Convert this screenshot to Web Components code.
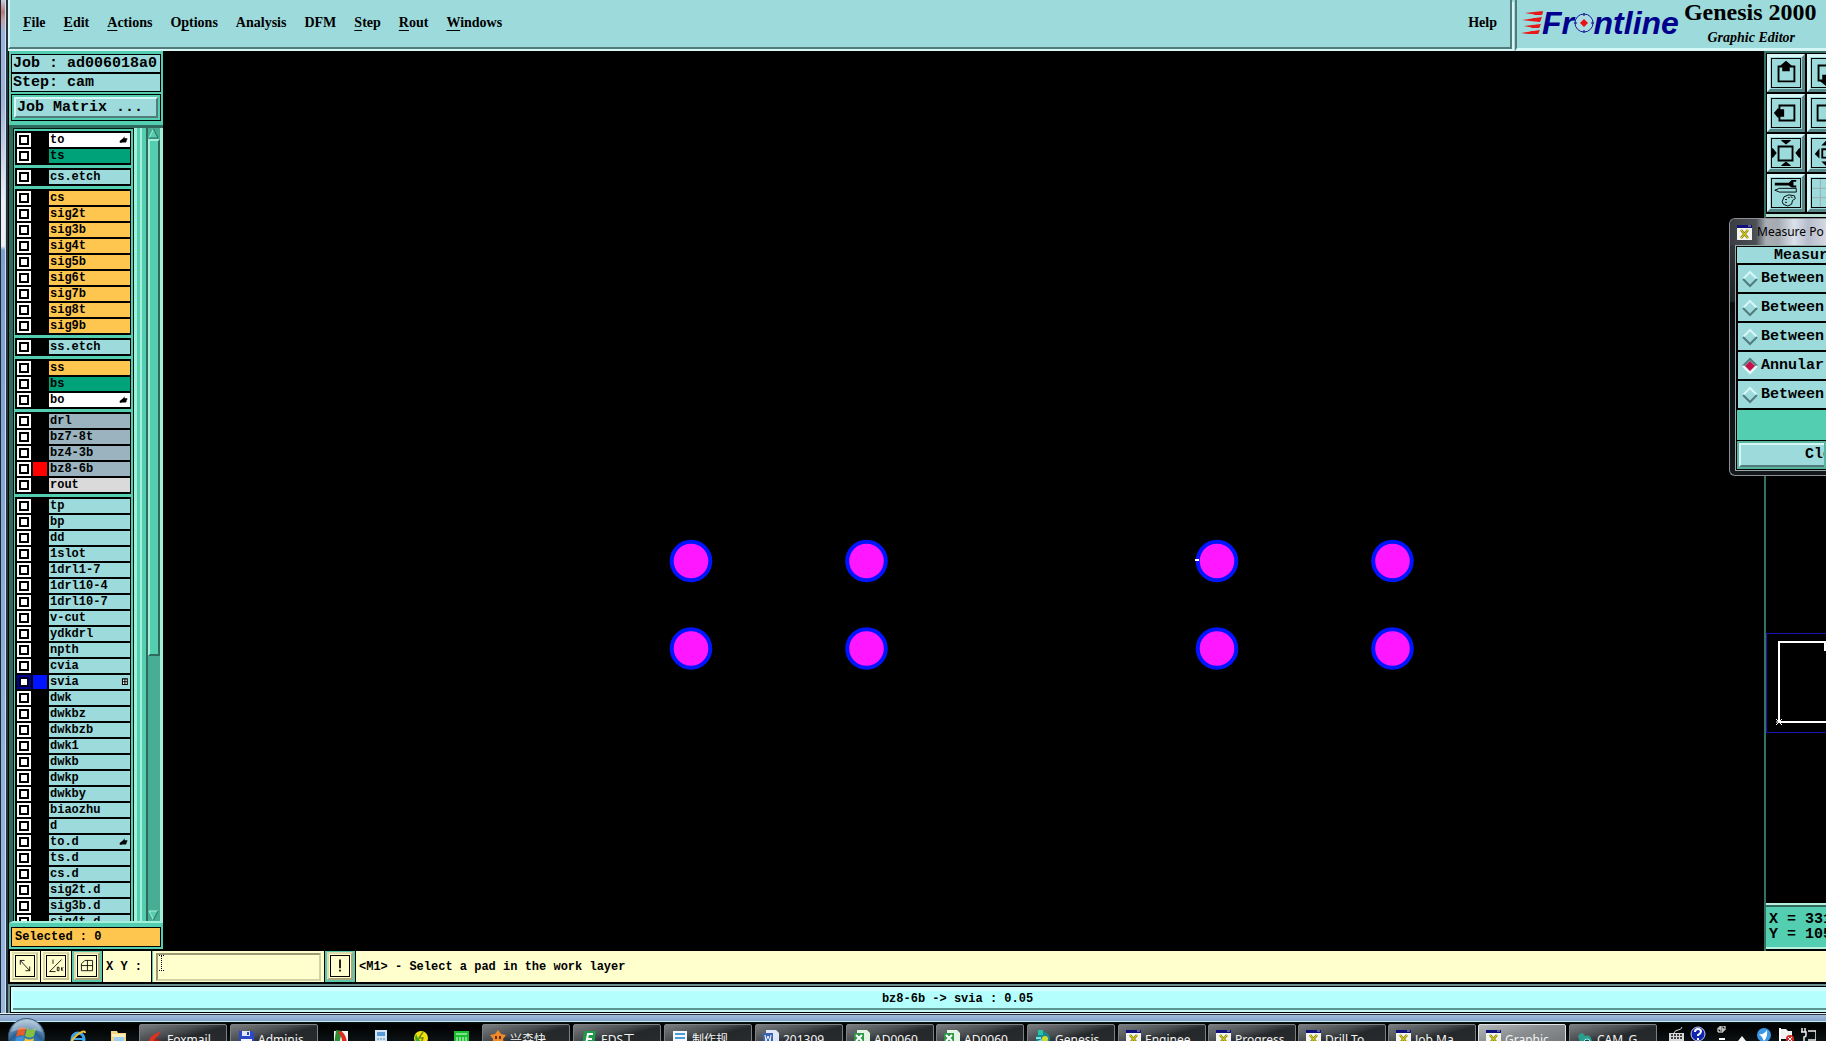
<!DOCTYPE html>
<html lang="en">
  <head>
    <meta charset="utf-8">
    <title>Genesis 2000 - Graphic Editor</title>
    <style>
      html, body {
        margin: 0;
        height: 100%;
        overflow: hidden;
        background: #000;
      }
      body {
        --teal: #9cdadb;
        --teal-hi: #d6f7f6;
        --teal-lo: #527c7c;
        --green: #54ceb0;
        --green-hi: #a4efda;
        --green-lo: #2f6a5c;
        --cream: #ffffce;
        --mono: "Liberation Mono", "Courier New", monospace;
        --serif: "Liberation Serif", "Times New Roman", serif;
        --ui: "Noto Sans", "Noto Sans CJK SC", sans-serif;
      }
    </style>
  </head>
  <body>
    <gx-desktop></gx-desktop>

<script>
function define(name, html, setup) {
  const tmpl = document.createElement('template');
  tmpl.innerHTML = '<style>*{box-sizing:border-box}:host{box-sizing:border-box}</style>' + html;
  customElements.define(name, class extends HTMLElement {
    connectedCallback() {
      if (this.shadowRoot) return;
      this.attachShadow({mode: 'open'});
      this.shadowRoot.append(tmpl.content.cloneNode(true));
      if (setup) setup(this, this.shadowRoot);
    }
  });
}

/* ---------- menu bar ---------- */
define('gx-menu', `
  <style>
    :host { display: block; }
    button {
      display: block; margin: 0; padding: 0; border: 0; background: none;
      font: bold 14px/18px var(--serif); color: #000;
    }
    u { text-underline-offset: 3px; text-decoration-thickness: 1px; }
  </style>
  <button type="button"></button>
`, (el, root) => {
  const t = el.getAttribute('label');
  const k = el.getAttribute('key');
  const i = k ? t.indexOf(k) : -1;
  root.querySelector('button').innerHTML = i < 0 ? t : t.slice(0, i) + '<u>' + k + '</u>' + t.slice(i + 1);
});

define('gx-logo', `
  <style>
    :host { display: flex; align-items: center; height: 30px; }
    .streaks { display: block; width: 24px; height: 24px; margin-right: -3px; }
    .word { font: italic bold 32px/30px "Liberation Sans", Arial, sans-serif; color: #00008c; }
    .o { position: relative; color: transparent; }
    .o svg { position: absolute; left: 0; top: 8px; width: 20px; height: 20px; }
  </style>
  <svg class="streaks" viewBox="0 0 24 24" fill="#e81818">
    <path d="M4 2L22 0L20 4L10 3Z"/><path d="M1 9L21 6L19 11L9 10Z"/>
    <path d="M3 15L20 13L18 17L8 16Z"/><path d="M0 22L19 19L17 23L8 23Z"/>
    <path d="M14 1h8l-1 3h-8zM12 7h8l-1 3h-7zM11 14h8l-1 3h-8zM10 20h8l-1 3h-9z"/>
  </svg>
  <span class="word">Fr<span class="o">o<svg viewBox="0 0 20 20">
    <circle cx="10" cy="10" r="9" fill="#aadde2" stroke="#1c1c9a"/>
    <path d="M10 0v3M10 17v3M0 10h3M17 10h3" stroke="#00008c"/>
    <path d="M10 6L14 10L10 14L6 10Z" fill="#e81010"/>
  </svg></span>ntline</span>
`);

define('gx-menubar', `
  <style>
    :host { display: flex; height: 51px; background: var(--teal); }
    nav {
      flex: 1; display: flex; gap: 18px; padding: 14px 13px 0 13px;
      border: solid; border-width: 0 2px 2px 2px;
      border-color: var(--teal-lo) var(--teal-lo) var(--teal-lo) var(--teal-hi);
    }
    .left { flex: 1; display: flex; box-shadow: 0 2px var(--teal-hi), 2px 2px var(--teal-hi); margin-bottom: 2px; margin-right: 3px; }
    gx-menu:last-child { margin-left: auto; }
    .brand {
      width: 311px; flex: none; display: flex; gap: 5px; align-items: flex-start; padding-left: 4px; overflow: hidden;
      border-left: 2px solid var(--teal-lo); border-bottom: 3px solid var(--teal-hi);
    }
    gx-logo { margin-top: 8px; }
    .name { display: flex; flex-direction: column; align-items: center; white-space: nowrap; }
    h1 { margin: 0; font: bold 24px/24px var(--serif); }
    h2 { margin: 0; padding-left: 2px; font: italic bold 14px/27px var(--serif); }
  </style>
  <div class="left">
    <nav>
      <gx-menu label="File" key="F"></gx-menu>
      <gx-menu label="Edit" key="E"></gx-menu>
      <gx-menu label="Actions" key="A"></gx-menu>
      <gx-menu label="Options" key="p"></gx-menu>
      <gx-menu label="Analysis"></gx-menu>
      <gx-menu label="DFM"></gx-menu>
      <gx-menu label="Step" key="S"></gx-menu>
      <gx-menu label="Rout" key="R"></gx-menu>
      <gx-menu label="Windows" key="W"></gx-menu>
      <gx-menu label="Help"></gx-menu>
    </nav>
  </div>
  <div class="brand">
    <gx-logo></gx-logo>
    <div class="name"><h1>Genesis 2000</h1><h2>Graphic Editor</h2></div>
  </div>
`);

/* ---------- layer list ---------- */
const marks = {
  hand: '<path d="M1 7L6 3L8 0V3H12V5H11V8H10V9H4L3 10L1 9Z"/>',
  grid: '<path d="M5 1h7v8h-7zM8.500 1v8M5 5h7" fill="#fff" stroke="#000" stroke-width="1.500"/>'
};

define('gx-layer', `
  <style>
    :host { display: block; height: 16px; padding: 1px 0; }
    label { display: grid; grid-template-columns: 14px 14px 1fr; gap: 2px; height: 14px; }
    input {
      appearance: none; margin: 0; width: 14px; height: 14px;
      background: #fff; border: 2px solid #fff; box-shadow: inset 0 0 0 2px #000;
    }
    :host([active]) input { border-color: #000096; box-shadow: inset 0 0 0 2px #00001c; }
    .swatch { background: var(--swatch, #000); }
    .name {
      display: flex; justify-content: space-between; align-items: center;
      padding: 0 2px 0 1px; overflow: hidden; background: var(--fill, var(--teal));
      font: bold 12px/15px var(--mono); color: #000;
    }
    svg { width: 9px; height: 8px; }
  </style>
  <label><input type="checkbox"><span class="swatch"></span><span class="name"><slot></slot></span></label>
`, (el, root) => {
  const fills = {paste: '#fff', mask: '#00a27a', signal: '#fec64e', drill: '#9ab3be', rout: '#dadada'};
  const fill = fills[el.getAttribute('kind')];
  if (fill) el.style.setProperty('--fill', fill);
  if (el.hasAttribute('swatch')) el.style.setProperty('--swatch', el.getAttribute('swatch'));
  if (el.hasAttribute('mark')) {
    root.querySelector('.name').insertAdjacentHTML('beforeend',
      '<svg viewBox="0 0 13 11">' + marks[el.getAttribute('mark')] + '</svg>');
  }
});

// name | kind | mark | swatch, one array per framed group
const groups = [
  ['to|paste|hand', 'ts|mask'],
  ['cs.etch'],
  ['cs|signal', 'sig2t|signal', 'sig3b|signal', 'sig4t|signal', 'sig5b|signal', 'sig6t|signal', 'sig7b|signal', 'sig8t|signal', 'sig9b|signal'],
  ['ss.etch'],
  ['ss|signal', 'bs|mask', 'bo|paste|hand'],
  ['drl|drill', 'bz7-8t|drill', 'bz4-3b|drill', 'bz8-6b|drill||#f00', 'rout|rout'],
  ['tp', 'bp', 'dd', '1slot', '1drl1-7', '1drl10-4', '1drl10-7', 'v-cut', 'ydkdrl', 'npth', 'cvia', 'svia||grid|#0014ff',
   'dwk', 'dwkbz', 'dwkbzb', 'dwk1', 'dwkb', 'dwkp', 'dwkby', 'biaozhu', 'd', 'to.d||hand', 'ts.d', 'cs.d', 'sig2t.d', 'sig3b.d', 'sig4t.d']
];

define('gx-layer-list', `
  <style>
    :host {
      display: flex; min-height: 0; overflow: hidden; background: var(--green);
      border-left: 4px solid var(--green-lo); border-top: 3px solid var(--green-lo); border-bottom: 2px solid var(--green-hi);
    }
    .list {
      flex: 1; min-width: 0; overflow: hidden; display: flex; flex-direction: column; gap: 3px;
      padding: 2px 2px 0 1px; border: solid #001a12; border-width: 1px 1px 0 1px;
    }
    .group { flex: none; background: #000; padding: 1px 1px 1px 2px; }
    .rail { width: 12px; border: solid var(--green-hi); border-width: 0 0 0 3px; }
    .rail i { display: block; height: 100%; width: 5px; border-right: 2px solid var(--green-hi); }
    .bar {
      width: 17px; display: flex; flex-direction: column; background: #48ad95;
      border-left: 2px solid var(--green-lo); border-right: 3px solid var(--green-hi);
    }
    .bar svg { display: block; width: 11px; height: 11px; flex: none; }
    .thumb {
      flex: 516; background: var(--green); border: 2px solid;
      border-color: var(--green-hi) var(--green-lo) var(--green-lo) var(--green-hi);
    }
    .trough { flex: 256; }
  </style>
  <div class="list"></div>
  <div class="rail"><i></i></div>
  <div class="bar">
    <svg viewBox="0 0 11 11"><path d="M5.5 1L10 10H1Z" fill="#54ceb0"/><path d="M5.5 1L1 10" stroke="#a4efda" fill="none"/><path d="M5.5 1L10 10H1" stroke="#2f6a5c" fill="none"/></svg>
    <div class="thumb"></div>
    <div class="trough"></div>
    <svg viewBox="0 0 11 11"><path d="M1 1H10L5.5 10Z" fill="#54ceb0"/><path d="M10 1H1L5.5 10" stroke="#a4efda" fill="none"/><path d="M10 1L5.5 10" stroke="#2f6a5c" fill="none"/></svg>
  </div>
`, (el, root) => {
  root.querySelector('.list').innerHTML = groups.map(g => '<div class="group">' + g.map(row => {
    const [name, kind, mark, swatch] = row.split('|');
    return '<gx-layer' + (kind ? ' kind="' + kind + '"' : '') + (mark ? ' mark="' + mark + '"' : '') +
      (swatch ? ' swatch="' + swatch + '"' : '') + (name == 'svia' ? ' active' : '') + '>' + name + '</gx-layer>';
  }).join('') + '</div>').join('');
});

define('gx-sidebar', `
  <style>
    :host {
      display: flex; flex-direction: column; min-height: 0; color: #000;
      border-left: 1px solid #000; border-bottom: 2px solid #000; background: var(--green);
    }
    .info { margin: 3px 2px 0; }
    .info div {
      height: 19px; padding-left: 1px; border: 1px solid #000; background: var(--teal);
      font: bold 15px/18px var(--mono); white-space: pre;
    }
    .matrix { margin: 2px 2px 4px; padding: 2px; height: 27px; border: 1px solid #000; }
    button {
      display: block; width: 100%; height: 21px; padding: 0 0 0 1px; text-align: left;
      border: 2px solid; border-color: var(--teal-hi) var(--teal-lo) var(--teal-lo) var(--teal-hi);
      background: var(--teal); font: bold 15px/18px var(--mono); color: #000;
    }
    gx-layer-list { flex: 1; }
    .selected {
      margin: 4px 2px 2px; height: 20px; padding-left: 3px; border: 1px solid #000;
      background: #fec64e; font: bold 12px/18px var(--mono);
    }
  </style>
  <div class="info"><div>Job : ad006018a0</div><div>Step: cam</div></div>
  <div class="matrix"><button type="button">Job Matrix ...</button></div>
  <gx-layer-list></gx-layer-list>
  <div class="selected">Selected : 0</div>
`);

/* ---------- drawing area ---------- */
define('gx-canvas', `
  <style>
    :host { display: block; min-width: 0; background: #000; overflow: hidden; }
    svg { display: block; width: 100%; height: 100%; }
    circle { fill: #ff18ff; stroke: #0014ff; stroke-width: 4px; }
  </style>
  <svg></svg>
`, (el, root) => {
  let s = '';
  for (const y of [510, 597.5]) {
    for (const x of [528, 703.5, 1054, 1229.5]) s += '<circle cx="' + x + '" cy="' + y + '" r="19.3"/>';
  }
  // measuring cursor
  root.querySelector('svg').innerHTML = s + '<path d="M1032 509h4" stroke="#fff" stroke-width="2"/>';
});

/* ---------- right hand tools ---------- */
const tools = {
  up: '<path d="M7 8h17v16H7z" class="b"/><path d="M15 2l6 5v1h-2v5h-8V8H9V7z"/>',
  down: '<path d="M7 7h17v16H7z" class="b"/><path d="M15 29l6-5v-1h-2v-6h-8v6H9v1z"/>',
  left: '<path d="M8 7h16v16H8z" class="b"/><path d="M2 15l5-6v2h6v8H7v2z"/>',
  right: '<path d="M6 7h16v16H6z" class="b"/><path d="M28 15l-5-6v2h-6v8h6v2z"/>',
  in: '<path d="M7 8h15v15H7z" class="b"/><path d="M10 1h10v1l-5 4l-5-4zM10 29h10v-1l-5-4l-5 4zM0 10h1l4 5l-4 5H0zM30 10h-1l-4 5l4 5h1z"/>',
  out: '<path d="M11 11h8v9h-8z" class="b"/><path d="M10 7h10l-5-5zM10 24h10l-5 5zM8 10v11l-5-5zM23 10v11l5-5z"/>',
  setup: '<path d="M3 4h15l3-3h5v2h-3v4h3v2h-5l-3-2H3z"/><path d="M3 12l5-2h18v4H8z" fill="none" stroke="#000"/><path d="M11 24l2-5 5-2 6 1 1 3-3 2-1 4-4 2-5-2zM14 22h2M17 20h2M14 25h2M20 19l2 1" fill="none" stroke="#000"/>',
  grid: '<path d="M9 0v30M19 0v30M0 10h30M0 20h30" fill="none" stroke="#a0a9ad"/>'
};

define('gx-tool', `
  <style>
    :host { display: block; width: 38px; height: 38px; }
    button {
      display: block; width: 38px; height: 38px; padding: 1px; background: var(--teal);
      border: 3px solid; border-color: var(--teal-hi) #568786 #568786 var(--teal-hi);
    }
    svg { display: block; width: 30px; height: 30px; border: 1px solid #000; }
    .b { fill: none; stroke: #000; stroke-width: 2px; }
  </style>
  <button type="button"><svg viewBox="0 0 30 30"></svg></button>
`, (el, root) => {
  const icon = el.getAttribute('icon');
  root.querySelector('button').setAttribute('aria-label', icon);
  root.querySelector('svg').innerHTML = tools[icon];
});

define('gx-right-panel', `
  <style>
    :host {
      display: flex; flex-direction: column; min-height: 0; overflow: hidden;
      border-left: 2px solid #356f63; background: #000; color: #000;
    }
    .tools {
      flex: none; height: 166px; display: grid; grid-template-columns: 38px 38px; grid-auto-rows: 38px; gap: 2px;
      padding: 1px; border: solid; border-width: 2px 0 3px 0; border-color: #356f63 transparent #b8e4d8;
    }
    .overview { flex: 1; min-height: 0; }
    .overview svg { display: block; width: 100%; height: 100%; }
    .coords {
      flex: none; height: 46px; margin-bottom: 2px; padding: 7px 0 0 3px; background: var(--green);
      border: solid; border-width: 2px 0; border-color: #b8f0de;
      box-shadow: inset 0 2px var(--green-lo);
      font: bold 15px/15px var(--mono); white-space: pre;
    }
  </style>
  <div class="tools">
    <gx-tool icon="up"></gx-tool><gx-tool icon="down"></gx-tool>
    <gx-tool icon="left"></gx-tool><gx-tool icon="right"></gx-tool>
    <gx-tool icon="in"></gx-tool><gx-tool icon="out"></gx-tool>
    <gx-tool icon="setup"></gx-tool><gx-tool icon="grid"></gx-tool>
  </div>
  <div class="overview">
    <svg fill="none">
      <rect x="0.5" y="416.5" width="160" height="99" stroke="#1616b0"/>
      <path d="M160 425H13V505H160M59 425v9" stroke="#fff" stroke-width="2"/>
      <path d="M10 502l6 6M16 502l-6 6M10 505h6" stroke="#fff"/>
    </svg>
  </div>
  <div class="coords"><div>X = 331</div><div>Y = 105</div></div>
`);

/* ---------- command line and status ---------- */
const cmds = {
  snap: '<path d="M5 5L16 17M5 10V5H10M16 12V17H11"/>',
  angle: '<path d="M3 18L17 4M3 18H10M7 4V9M12 13h2v4h-2zM17 13v4M19 13l-2 2l2 2"/>',
  cell: '<path d="M8 5H17V17H4V9ZM11 5V17M4 11H17"/>',
  alert: '<path d="M10.5 4V14M10.5 16V18" stroke-width="2"/>'
};

define('gx-cmd', `
  <style>
    :host { display: block; padding: 1px 2px; background: var(--cream); }
    :host([pressed]) { background: #58c9ab; }
    button {
      display: block; height: 28px; width: 26px; padding: 1px; background: var(--cream);
      border: 2px solid; border-color: #dcdcae #c4c196 #c4c196 #dcdcae;
    }
    :host([pressed]) button { border-color: #dcdcae #aaa67c #aaa67c #dcdcae; }
    svg { display: block; width: 20px; height: 22px; border: 1px solid #000; fill: none; stroke: #000; }
  </style>
  <button type="button"><svg viewBox="0 0 21 23"></svg></button>
`, (el, root) => {
  root.querySelector('button').setAttribute('aria-label', el.getAttribute('icon'));
  root.querySelector('svg').innerHTML = cmds[el.getAttribute('icon')];
});

define('gx-command-line', `
  <style>
    :host {
      display: flex; gap: 1px; height: 31px; background: #000; color: #000;
      font: bold 12px/32px var(--mono); padding-left: 2px;
    }
    label { width: 48px; padding-left: 3px; background: var(--cream); white-space: pre; }
    .field { position: relative; width: 172px; padding: 2px 3px 1px; background: var(--cream); border-left: 1px solid #58c9ab; }
    input {
      display: block; width: 100%; height: 28px; padding: 0 4px; background: var(--cream); outline: 0;
      border: 2px solid; border-color: #9c9a74 #d2d2a6 #d2d2a6 #9c9a74; font: inherit;
    }
    .caret { position: absolute; left: 6px; top: 4px; width: 5px; height: 16px; }
    .message { flex: 1; padding-left: 3px; background: var(--cream); white-space: nowrap; overflow: hidden; }
  </style>
  <gx-cmd icon="snap"></gx-cmd>
  <gx-cmd icon="angle"></gx-cmd>
  <gx-cmd icon="cell" pressed></gx-cmd>
  <label for="xy">X Y :</label>
  <div class="field">
    <input id="xy" type="text">
    <svg class="caret" viewBox="0 0 5 16" stroke="#000" fill="none"><path d="M0 .5h5M0 15.5h5M2.5 1v14" stroke-dasharray="1 1"/></svg>
  </div>
  <gx-cmd icon="alert" pressed></gx-cmd>
  <div class="message">&lt;M1&gt; - Select a pad in the work layer</div>
`);

define('gx-status', `
  <style>
    :host { display: block; padding-left: 2px; background: #6a8f90; border-top: 2px solid #000; }
    div {
      margin-top: 2px; height: 27px; padding-left: 78px; text-align: center; background: #b4fffe; color: #000;
      border: 1px solid #000; border-right: 0;
      box-shadow: inset 2px 4px #d2ffff, inset 0 -2px #c8f8f8, inset 0 -4px #5c9490;
      font: bold 12px/25px var(--mono);
    }
  </style>
  <div><slot></slot></div>
`);

/* ---------- measure popup ---------- */
define('gx-x-icon', `
  <style>
    :host { display: block; flex: none; width: 15px; height: 15px; }
    svg { display: block; width: 15px; height: 15px; }
  </style>
  <svg viewBox="0 0 15 15"><path d="M0 0h15v15H0z" fill="#f4f4ee"/><path d="M0 0h15v3H0z" fill="#10107c"/><path d="M11 1h3" stroke="#aab"/><path d="M4 5L11 13M11 5L4 13" stroke="#8a8410" stroke-width="2.500"/><path d="M4 5L11 13M11 5L4 13" stroke="#e6de22" stroke-width="1"/></svg>
`);

define('gx-radio', `
  <style>
    :host { display: block; height: 29px; padding-bottom: 2px; background: #000; }
    label {
      display: flex; align-items: center; gap: 4px; height: 27px; padding-left: 5px; background: var(--teal);
      font: bold 15px/27px var(--mono); white-space: nowrap;
    }
    input { position: absolute; opacity: 0; margin: 0; width: 14px; height: 14px; }
    svg { flex: none; width: 14px; height: 14px; fill: none; stroke-width: 2px; overflow: visible; }
    .top { stroke: var(--teal-hi); }
    .bottom { stroke: var(--teal-lo); }
    input:checked + svg .top { stroke: var(--teal-lo); }
    input:checked + svg .bottom { stroke: #eefafa; }
    input:checked + svg { fill: #c8104c; }
  </style>
  <label><input type="radio" name="mode"><svg viewBox="0 0 14 14"><path d="M7 2L12 7L7 12L2 7Z" stroke="none"/><path class="top" d="M0 7L7 0L14 7" fill="none"/><path class="bottom" d="M0 7L7 14L14 7" fill="none"/></svg><slot></slot></label>
`, (el, root) => { root.querySelector('input').checked = el.hasAttribute('checked'); });

define('gx-measure', `
  <style>
    :host {
      display: block; width: 97px; height: 258px; overflow: hidden; color: #000;
      border: 1px solid #8c9096; border-right: 0; border-radius: 6px 0 0 6px;
      background: linear-gradient(#3a3e44, #202428 82px, #0a0c0e 84px, #14181c);
      padding: 0 0 0 5px;
    }
    header {
      display: flex; align-items: center; gap: 5px; height: 26px; margin-left: -5px; padding-left: 7px;
      background: linear-gradient(90deg, #3a3d42, #4c4f54 26px, #a8aeb4 36px, #a4aab0 48px, #dce2ec 64px, #b6bccc 78px, #d4d8e0);
      font: 12px/26px var(--ui); white-space: nowrap;
    }
    .body { height: 226px; border: 1px solid #9aa; border-right: 0; background: #000; padding: 1px 0 1px 1px; }
    .title { height: 16px; padding-left: 37px; background: var(--teal); font: bold 15px/17px var(--mono); margin-bottom: 2px; white-space: nowrap; overflow: hidden; }
    .modes { padding-left: 1px; }
    .gap { height: 30px; background: var(--green); margin-bottom: 1px; }
    .close { padding: 2px; height: 28px; background: #58b69e; }
    button {
      display: block; width: 100%; height: 24px; padding: 0 0 0 64px; text-align: left; overflow: hidden; background: var(--teal);
      border: 2px solid; border-right: 0; border-color: var(--teal-hi) var(--teal-hi) var(--teal-lo);
      font: bold 15px/20px var(--mono); color: #000;
    }
  </style>
  <header><gx-x-icon></gx-x-icon><span>Measure Po</span></header>
  <div class="body">
    <div class="title">Measur</div>
    <div class="modes">
      <gx-radio>Between</gx-radio>
      <gx-radio>Between</gx-radio>
      <gx-radio>Between</gx-radio>
      <gx-radio checked>Annular</gx-radio>
      <gx-radio>Between</gx-radio>
    </div>
    <div class="gap"></div>
    <div class="close"><button type="button">Clo</button></div>
  </div>
`);

/* ---------- Windows taskbar ---------- */
const appIcons = {
  fox: '<path d="M2 16Q0 8 8 4L14 1L11 6Q6 8 7 16Z" fill="#e03020"/><circle cx="10" cy="12" r="3" fill="#b01810"/>',
  disk: '<path d="M1 1h13l2 2v13H1z" fill="#2a48c8"/><path d="M4 1h8v5H4z" fill="#dfe6f4"/><path d="M9 2h2v3H9z" fill="#2a48c8"/><path d="M3 9h11v7H3z" fill="#f4f4f4"/>',
  flower: '<path d="M8 0l3 4 5 1-3 4 1 6-6-2-6 2 1-6-3-4 5-1z" fill="#f08a28"/><path d="M5 6h2v3H5zM9 6h2v3H9z" fill="#6a2a08"/>',
  eds: '<path d="M3 1h12l-2 15H1z" fill="#1f9a48"/><path d="M12 4H7L5 14M6 9h5" stroke="#fff" stroke-width="2" fill="none"/>',
  note: '<path d="M1 1h14v15H1z" fill="#f4f8fc"/><path d="M3 4h10M3 8h10M3 12h10" stroke="#4c9cd8" stroke-width="2"/>',
  word: '<path d="M3 0h10l3 3v13H3z" fill="#dfe8f8"/><path d="M0 3h10v10H0z" fill="#3a64b8"/><path d="M2 5l1 6 2-5 2 5 1-6" stroke="#fff" fill="none"/>',
  excel: '<path d="M3 0h10l3 3v13H3z" fill="#e4f4e4"/><path d="M0 3h10v10H0z" fill="#2f9848"/><path d="M2 5l6 6M8 5l-6 6" stroke="#fff" stroke-width="2"/>',
  gear: '<circle cx="8" cy="9" r="7" fill="#1a8890"/><path d="M3 0h5v5H3z" fill="#24c4a8"/><circle cx="10" cy="9" r="3" fill="#d4dc30"/><path d="M1 8h5M3 12l4-2" stroke="#7ce4e0" stroke-width="2"/>',
  cam: '<path d="M1 6q4-6 7 0q6-2 7 6v4H4z" fill="#28a08c"/><circle cx="10" cy="12" r="3" fill="#104c48" stroke="#9ee"/>',
  ie: '<circle cx="8" cy="10" r="6" fill="none" stroke="#3ca4e8" stroke-width="3"/><path d="M3 10h11" stroke="#3ca4e8" stroke-width="2"/><path d="M1 16Q-1 13 7 6Q15 0 15 4" stroke="#f0c030" stroke-width="2" fill="none"/>',
  folder: '<path d="M1 2h6l1 2h8v12H1z" fill="#f2d684"/><path d="M4 7h10v9H4z" fill="#9ccff0"/><path d="M2 5h13v3H2z" fill="#fbeeb8"/>',
  paint: '<path d="M1 2h14v14H1z" fill="#f4f4f4"/><path d="M3 1l6 1-3 14H1z" fill="#2f8c30"/><path d="M8 2q6 4 6 14H9q1-8-4-13z" fill="#e02c20"/>',
  calc: '<path d="M2 1h12v15H2z" fill="#cfe4f6"/><path d="M4 3h8v4H4z" fill="#5a9ad4"/><path d="M4 10h8M4 13h8" stroke="#6c8cac" stroke-dasharray="2 1"/>',
  swirl: '<circle cx="8" cy="9" r="7" fill="#f2e010"/><path d="M3 5q-2 5 1 10q4 2 6-1q-5-3-7-9z" fill="#38a428"/><path d="M10 3l-4 6h4l-2 5" stroke="#6a8c10" fill="none" stroke-width="1.500"/>',
  soft: '<path d="M1 2h15v14H1z" fill="#18c030"/><path d="M3 5h11M4 8v8M7 8v8M10 8v8M13 8v8" stroke="#e8fce8"/>',
  kbd: '<path d="M1 7h15v9H1z" fill="#d8d8d8"/><path d="M3 9h11M3 12h11" stroke="#444" stroke-dasharray="2 1" stroke-width="2"/><path d="M6 7q1-3 4-3t4-3" stroke="#d8d8d8" fill="none"/>',
  help: '<circle cx="8" cy="8" r="7" fill="#1024b0" stroke="#c4ccec"/><path d="M5 6q0-3 3-3t3 2.500q0 1.500-3 3.500v1M8 12v2" stroke="#fff" stroke-width="2" fill="none"/>',
  win: '<path d="M8 0h5v4H8zM6 2h5v4H6z" fill="#111" stroke="#fff"/><path d="M7 13h6" stroke="#fff" stroke-width="2"/>',
  tri: '<path d="M8 10l4 5H4z" fill="#f4f4f4"/>',
  bird: '<circle cx="8" cy="9" r="7" fill="#3c98e4"/><path d="M3 8q5 1 8-4q1 7-3 11q-1-4-5-7z" fill="#fff"/>',
  flag: '<path d="M2 2v14" stroke="#fff" stroke-width="2"/><path d="M3 3h5l2 2h4v8H3z" fill="#f2f2f2"/><circle cx="12" cy="13" r="4" fill="#d42a20"/><path d="M10 11l4 4M14 11l-4 4" stroke="#fff"/>',
  net: '<path d="M2 2v4M5 2v4M1 6h5v3q0 2-2 2v5M8 5h8v9H8" stroke="#f0f0f0" stroke-width="1.500" fill="none"/>'
};

define('gx-app-icon', `
  <style>
    :host { display: block; flex: none; width: 16px; height: 16px; }
    svg { display: block; width: 16px; height: 16px; }
  </style>
  <svg viewBox="0 0 16 16"></svg>
`, (el, root) => { root.querySelector('svg').innerHTML = appIcons[el.getAttribute('icon')]; });

define('gx-task', `
  <style>
    :host { display: block; flex: none; width: 88px; margin-right: 3px; }
    :host([stacked]) { margin-right: 2px; }
    button {
      display: flex; gap: 4px; width: 100%; height: 34px; padding: 5px 0 0 7px; align-items: flex-start; color: #f4f4f4;
      border: 1px solid #7c8082; border-radius: 2px;
      background: linear-gradient(165deg, #7a7e80, #4a4e50 30%, #24282a 45%, #2a2e30);
      font: 12px/16px var(--ui); white-space: nowrap; overflow: hidden;
    }
    :host([active]) button { background: linear-gradient(165deg, #b4b8ba, #8a8e90 35%, #64686a); border-color: #dfe2e4; }
    span { padding-top: 2px; }
  </style>
  <button type="button"><i></i><span><slot></slot></span></button>
`, (el, root) => {
  const icon = el.getAttribute('icon');
  root.querySelector('i').outerHTML = icon == 'x' ? '<gx-x-icon></gx-x-icon>' : '<gx-app-icon icon="' + icon + '"></gx-app-icon>';
});

define('gx-taskbar', `
  <style>
    :host {
      display: flex; height: 19px; flex: none; padding-left: 8px; align-items: flex-start;
      background: linear-gradient(#0a1012, #000 3px, #0c1214); position: relative;
    }
    .start { flex: none; width: 37px; height: 37px; margin: -4px 25px 0 0; padding: 0; border: 0; background: none; }
    .start svg { display: block; width: 37px; height: 37px; }
    .quick { display: flex; gap: 24px; padding: 7px 13px 0 0; flex: none; }
    .quick.apps { padding: 7px 13px 0 12px; }
    .tasks { display: flex; padding-top: 2px; flex: none; }
    .tray { display: flex; gap: 6px; padding: 4px 0 0 8px; flex: none; }
  </style>
  <button class="start" type="button" aria-label="Start">
    <svg viewBox="0 0 37 37">
      <defs><radialGradient id="g" cx=".5" cy=".9" r=".9"><stop offset="0" stop-color="#35b8f0"/><stop offset=".6" stop-color="#2a5f94"/><stop offset="1" stop-color="#a9c4d8"/></radialGradient></defs>
      <circle cx="18.500" cy="18.500" r="18" fill="url(#g)" stroke="#38566e"/>
      <path d="M10 11q4-3 8-1l-2 8q-4-2-8 1z" fill="#e85c28"/><path d="M19 10q4 3 9 0l-2 8q-4 3-9 0z" fill="#84c040"/>
      <path d="M8 20q4-3 8-1l-2 8q-4-2-8 1z" fill="#3c90dc"/><path d="M17 20q4 3 9 0l-2 8q-4 3-9 0z" fill="#f6c428"/>
      <path d="M3 14Q6 3 18 2T34 14Q18 8 3 14Z" fill="#fff" opacity=".3"/>
    </svg>
  </button>
  <div class="quick">
    <gx-app-icon icon="ie"></gx-app-icon><gx-app-icon icon="folder"></gx-app-icon>
  </div>
  <div class="tasks">
    <gx-task icon="fox">Foxmail</gx-task><gx-task icon="disk">Adminis</gx-task>
  </div>
  <div class="quick apps">
    <gx-app-icon icon="paint"></gx-app-icon><gx-app-icon icon="calc"></gx-app-icon>
    <gx-app-icon icon="swirl"></gx-app-icon><gx-app-icon icon="soft"></gx-app-icon>
  </div>
  <div class="tasks">
    <gx-task icon="flower">兴森快</gx-task><gx-task icon="eds">EDS工</gx-task><gx-task icon="note">制作规</gx-task>
    <gx-task icon="word">201309</gx-task><gx-task icon="excel" stacked>AD0060</gx-task><gx-task icon="excel">AD0060</gx-task>
    <gx-task icon="gear">Genesis</gx-task><gx-task icon="x" stacked>Enginee</gx-task><gx-task icon="x" stacked>Progress</gx-task>
    <gx-task icon="x" stacked>Drill To</gx-task><gx-task icon="x" stacked>Job Ma</gx-task><gx-task icon="x" active>Graphic</gx-task>
    <gx-task icon="cam">CAM_G</gx-task>
  </div>
  <div class="tray">
    <gx-app-icon icon="kbd"></gx-app-icon><gx-app-icon icon="help"></gx-app-icon><gx-app-icon icon="win"></gx-app-icon>
    <gx-app-icon icon="tri"></gx-app-icon><gx-app-icon icon="bird"></gx-app-icon><gx-app-icon icon="flag"></gx-app-icon>
    <gx-app-icon icon="net"></gx-app-icon>
  </div>
`);

/* ---------- the whole screen ---------- */
define('gx-desktop', `
  <style>
    :host { display: flex; flex-direction: column; height: 100vh; position: relative; overflow: hidden; }
    .window { flex: 1; min-height: 0; display: flex; }
    .edge {
      flex: none; width: 8px; border: solid; border-width: 0 2px 0 1px; border-color: #000 #28343c #000 #1c2834;
      background: linear-gradient(#c8ccda, #b87878 12px, #c8a0a8 20px, #9cb4dc 32px, #a0b4d8 100px, #eceef4 200px, #f0eff0 246px, #7e9fd0 250px, #9ab8e0);
      box-shadow: inset -1px 0 #cfe0f4;
    }
    .client { flex: 1; min-width: 0; display: flex; flex-direction: column; }
    .work { flex: 1; min-height: 0; display: grid; grid-template-columns: 155px minmax(0, 1fr) 62px; }
    .frame {
      flex: none; height: 9px; border: solid; border-width: 1px 0; border-color: #e8f4f8 #000 #c4ecf4;
      background: linear-gradient(#26323c 1px, #a4bcdc 1px, #86a4cc);
    }
    gx-measure { position: absolute; right: 0; top: 218px; }
  </style>
  <div class="window">
    <div class="edge"></div>
    <div class="client">
      <gx-menubar></gx-menubar>
      <div class="work">
        <gx-sidebar></gx-sidebar>
        <gx-canvas></gx-canvas>
        <gx-right-panel></gx-right-panel>
      </div>
      <gx-command-line></gx-command-line>
      <gx-status>bz8-6b -&gt; svia : 0.05</gx-status>
    </div>
  </div>
  <div class="frame"></div>
  <gx-taskbar></gx-taskbar>
  <gx-measure></gx-measure>
`);
</script>
  </body>
</html>
